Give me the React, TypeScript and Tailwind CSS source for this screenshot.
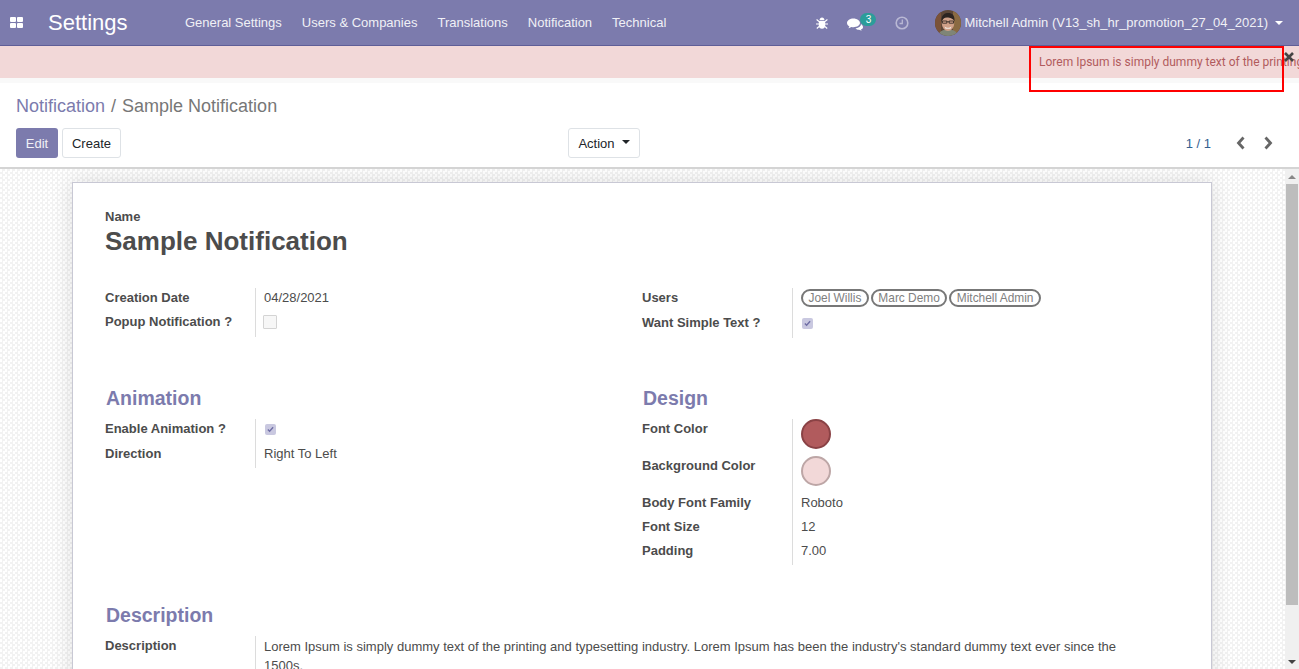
import React from "react";

const F = "font-['Liberation_Sans',Arial,sans-serif]";

function Field({ label, h, children, top = "pt-0" }: { label: string; h: string; children?: React.ReactNode; top?: string }) {
  return (
    <div className={`flex ${h}`}>
      <div className={`w-[150px] shrink-0 font-bold text-[13px] leading-[18px] text-[#4c4c4c] ${top}`}>{label}</div>
      <div className={`flex-1 border-l border-[#dcdcdc] pl-2 text-[13px] leading-[18px] text-[#4c4c4c] ${top}`}>{children}</div>
    </div>
  );
}

function Check({ on }: { on?: boolean }) {
  return on ? (
    <div className="w-[11px] h-[11px] mt-[3.5px] ml-[0.5px] rounded-[2px] bg-[#c9c8e0] flex items-center justify-center">
      <svg width="7" height="7" viewBox="0 0 8 8"><path d="M1 4l2 2 4-4.500" fill="none" stroke="#6f6ea5" strokeWidth="1.600" /></svg>
    </div>
  ) : (
    <div className="w-[14px] h-[14px] mt-[2px] -ml-px border border-[#d4d4d4] rounded-[1px] bg-[#f7f7f7]" />
  );
}

function Tag({ children }: { children: string }) {
  return (
    <span className="inline-block h-[18px] leading-[14px] px-[5.5px] border-2 border-[#777] rounded-[9px] text-[11.9px] text-[#808080]">{children}</span>
  );
}

function Heading({ children }: { children: string }) {
  return <div className="text-[19.5px] leading-[24px] font-bold text-[#7c7bad] pl-px">{children}</div>;
}

function Avatar() {
  return (
    <svg width="26" height="26" viewBox="0 0 26 26" className="rounded-full">
      <rect width="26" height="26" fill="#5c4636" />
      <rect x="18" y="0" width="8" height="26" fill="#8a6a42" />
      <rect x="0" y="0" width="6" height="26" fill="#7a5238" />
      <path d="M3 26c1-5 5-6.500 10-6.500s9 1.500 10 6.500z" fill="#7f8577" />
      <ellipse cx="13" cy="13.500" rx="6.200" ry="7.500" fill="#cfa088" />
      <path d="M6.500 11.500C6 4.500 10 3 13.500 3S20 5 19.500 11.500C18.500 8.500 15 7.500 12 7.500S8 9 6.500 11.500z" fill="#2c2420" />
      <path d="M7.500 11h4.300v2.200H7.500zM14.200 11h4.300v2.200h-4.300zM11.800 11.800h2.400" fill="none" stroke="#2a2320" strokeWidth="0.800" />
      <path d="M9.500 16.500c2 1.800 5 1.800 7 0l-1 2.200h-5z" fill="#f2ece6" />
    </svg>
  );
}

export default function App() {
  return (
    <div className={`${F} relative w-[1299px] h-[669px] overflow-hidden bg-white flex flex-col`}>
      {/* navbar */}
      <header className="h-[46px] shrink-0 bg-[#7c7bad] border-b border-[#5f5e97] flex items-center text-white">
        <svg width="13" height="11" viewBox="0 0 13 11" className="ml-[10px]">
          <rect x="0" y="0" width="6" height="5" rx="1" fill="#fff" />
          <rect x="7" y="0" width="6" height="5" rx="1" fill="#fff" />
          <rect x="0" y="6" width="6" height="5" rx="1" fill="#fff" />
          <rect x="7" y="6" width="6" height="5" rx="1" fill="#fff" />
        </svg>
        <span className="ml-[25px] text-[22px] leading-none w-[137px]">Settings</span>
        <nav className="flex gap-[20px] text-[13px] text-[#f0f0f6]">
          <span>General Settings</span>
          <span>Users &amp; Companies</span>
          <span>Translations</span>
          <span>Notification</span>
          <span>Technical</span>
        </nav>
        <div className="ml-auto flex items-center pr-[16px]">
          <svg width="12" height="13" viewBox="0 0 12 13" className="mr-[19px]" fill="#fff">
            <path d="M2.800 5h6.400v4.500c0 2-1.400 3.300-3.200 3.300S2.800 11.500 2.800 9.500z" />
            <path d="M3.500 4.300C3.500 2.700 4.600 1.500 6 1.500s2.500 1.200 2.500 2.800z" />
            <path d="M0.600 3.500L3 5.500M11.400 3.500L9 5.500M0 8h3M12 8H9M0.800 12.500L3 10.500M11.200 12.500L9 10.500" stroke="#fff" strokeWidth="1.100" />
          </svg>
          <div className="relative w-[29px] h-[16px] mr-[19px]">
            <svg width="16" height="13" viewBox="0 0 16 13" className="absolute left-0 top-[3px]" fill="#fff">
              <path d="M6.500 0.500C3 0.500 0 2.500 0 5c0 1.500 1 2.700 2.400 3.500-.2.700-.7 1.300-1.200 1.800 1.200-.2 2.300-.7 3.100-1.300.7.100 1.400.2 2.200.2 3.500 0 6.500-2 6.500-4.200S10 .5 6.500 .5z" />
              <path d="M14 6c.1 2-2 4-5.500 4.500 1 1 2.500 1.300 3.500 1.200.8.500 1.800.8 2.800.9-.4-.4-.8-.9-1-1.500C15.200 11.400 16 10.400 16 9.200c0-1.300-.8-2.400-2-3.200z" />
            </svg>
            <span className="absolute left-[13px] top-[-2px] h-[13px] w-[16px] rounded-full bg-[#2b9d9a] text-[10px] leading-[13px] text-center text-white">3</span>
          </div>
          <svg width="14" height="14" viewBox="0 0 14 14" className="mr-[26px]" fill="none" stroke="#b9b8d4">
            <circle cx="7" cy="7" r="5.800" strokeWidth="1.600" />
            <path d="M7.300 3.500v4H4.500" strokeWidth="1.300" />
          </svg>
          <Avatar />
          <span className="ml-[3px] text-[13px] text-[#f0f0f6]">Mitchell Admin (V13_sh_hr_promotion_27_04_2021)</span>
          <span className="ml-[7px] w-0 h-0 border-x-[4px] border-x-transparent border-t-[4px] border-t-white" />
        </div>
      </header>

      {/* banner */}
      <div className="h-[32px] shrink-0 bg-[#f2d8d8]" />
      <div className="h-[5px] shrink-0 bg-[#f9f9f9]" />

      {/* control panel */}
      <section className="h-[86px] shrink-0 border-b-2 border-[#d4d4d4] pl-4 pr-[25px]">
        <div className="text-[18px] leading-[24px] mt-[11px] text-[#777]">
          <span className="text-[#7c7bad]">Notification</span>
          <span className="mx-[6px]">/</span>
          <span>Sample Notification</span>
        </div>
        <div className="flex items-center mt-[10px] h-[30px] relative">
          <button className="h-[30px] w-[42px] pt-px rounded-[3px] bg-[#7c7bad] text-[13px] text-[#f0f0f6]">Edit</button>
          <button className="ml-1 h-[30px] w-[59px] pt-px rounded-[3px] border border-[#dee2e6] text-[13px] text-[#212529]">Create</button>
          <button className="ml-[447px] h-[30px] w-[72px] pt-px rounded-[3px] border border-[#dee2e6] text-[13px] text-[#212529] flex items-center justify-center gap-[7px]">
            Action<span className="w-0 h-0 border-x-[4px] border-x-transparent border-t-[4px] border-t-[#212529] -mt-[3px]" />
          </button>
          <div className="ml-auto flex items-center">
            <span className="text-[13px] text-[#35608f] mr-[24px] pt-px">1 / 1</span>
            <svg width="12" height="14" viewBox="0 0 12 14" className="mr-[15px]" fill="none" stroke="#666" strokeWidth="2.800"><path d="M8.500 1.500L3.500 7l5 5.500" /></svg>
            <svg width="12" height="14" viewBox="0 0 12 14" fill="none" stroke="#666" strokeWidth="2.800"><path d="M3.500 1.500L8.500 7l-5 5.500" /></svg>
          </div>
        </div>
      </section>

      {/* content */}
      <main className="flex-1 min-h-0 flex overflow-hidden">
        <div className="flex-1 min-w-0 bg-[repeating-conic-gradient(#f2f2f2_0_25%,#ffffff_0_50%)] bg-[length:5px_5px] pl-[72px] pr-[87px] pt-[13px]">
          <div className="h-[600px] bg-white border border-[#c8c8d4] shadow-[0_0_20px_rgba(0,0,0,0.12)] pl-[32px] pr-[60px] pt-[26px]">
            <div className="font-bold text-[13px] leading-[15px] text-[#4c4c4c]">Name</div>
            <div className="font-bold text-[26px] leading-[34px] text-[#4c4c4c]">Sample Notification</div>

            <div className="grid grid-cols-[537px_1fr] mt-[30px]">
              <div>
                <Field label="Creation Date" h="h-[24px]" top="pt-[1px]">04/28/2021</Field>
                <Field label="Popup Notification ?" h="h-[25px]" top="pt-[1px]"><Check /></Field>
              </div>
              <div>
                <Field label="Users" h="h-[25px]" top="pt-[1px]">
                  <div className="flex gap-[2px]"><Tag>Joel Willis</Tag><Tag>Marc Demo</Tag><Tag>Mitchell Admin</Tag></div>
                </Field>
                <Field label="Want Simple Text ?" h="h-[25px]" top="pt-[1px]"><Check on /></Field>
              </div>
            </div>

            <div className="grid grid-cols-[537px_1fr] mt-[48px]">
              <div>
                <Heading>Animation</Heading>
                <div className="mt-[9px]">
                  <Field label="Enable Animation ?" h="h-[25px]" top="pt-[1px]"><Check on /></Field>
                  <Field label="Direction" h="h-[24px]" top="pt-[1px]">Right To Left</Field>
                </div>
              </div>
              <div>
                <Heading>Design</Heading>
                <div className="mt-[9px]">
                  <Field label="Font Color" h="h-[37px]" top="pt-[1px]">
                    <div className="w-[30px] h-[30px] -mt-px rounded-full bg-[#b15b5d] border-2 border-[#8a4245]" />
                  </Field>
                  <Field label="Background Color" h="h-[37px]" top="pt-[1px]">
                    <div className="w-[30px] h-[30px] -mt-px rounded-full bg-[#f2d8d8] border-2 border-[#bda6a6]" />
                  </Field>
                  <Field label="Body Font Family" h="h-[24px]" top="pt-[1px]">Roboto</Field>
                  <Field label="Font Size" h="h-[24px]" top="pt-[1px]">12</Field>
                  <Field label="Padding" h="h-[24px]" top="pt-[1px]">7.00</Field>
                </div>
              </div>
            </div>

            <div className="mt-[38px]">
              <Heading>Description</Heading>
              <div className="mt-[9px]">
                <Field label="Description" h="h-[50px]" top="pt-[1px]">
                  <div className="leading-[19px] w-[870px]">Lorem Ipsum is simply dummy text of the printing and typesetting industry. Lorem Ipsum has been the industry's standard dummy text ever since the 1500s.</div>
                </Field>
              </div>
            </div>
          </div>
        </div>
      </main>

      {/* scrollbar */}
      <div className="absolute right-0 top-[169px] bottom-0 w-[14px] bg-[#f0f0f0] flex flex-col items-center">
        <div className="h-[15px] flex items-center justify-center">
          <span className="w-0 h-0 border-x-[4px] border-x-transparent border-b-[4px] border-b-[#888]" />
        </div>
        <div className="w-[12px] h-[421px] bg-[#bdbdbd]" />
        <div className="mt-auto h-[15px] flex items-center justify-center">
          <span className="w-0 h-0 border-x-[4px] border-x-transparent border-t-[4px] border-t-[#444]" />
        </div>
      </div>

      {/* marquee text over the banner */}
      <div className="absolute left-[1039px] top-[54px] w-[260px] overflow-hidden whitespace-nowrap font-['Roboto',sans-serif] text-[12px] leading-[16px] text-[#b15b5d]">
        Lorem Ipsum is simply dummy text of the printing
      </div>
      {/* annotation frame */}
      <div className="absolute left-[1029px] top-[46px] w-[255px] h-[46px] border-2 border-[#f00]" />
      {/* close */}
      <svg width="10" height="10" viewBox="0 0 10 10" className="absolute left-[1284px] top-[52px]" stroke="#444" strokeWidth="2.600"><path d="M1 1l8 8M9 1l-8 8" /></svg>
    </div>
  );
}
